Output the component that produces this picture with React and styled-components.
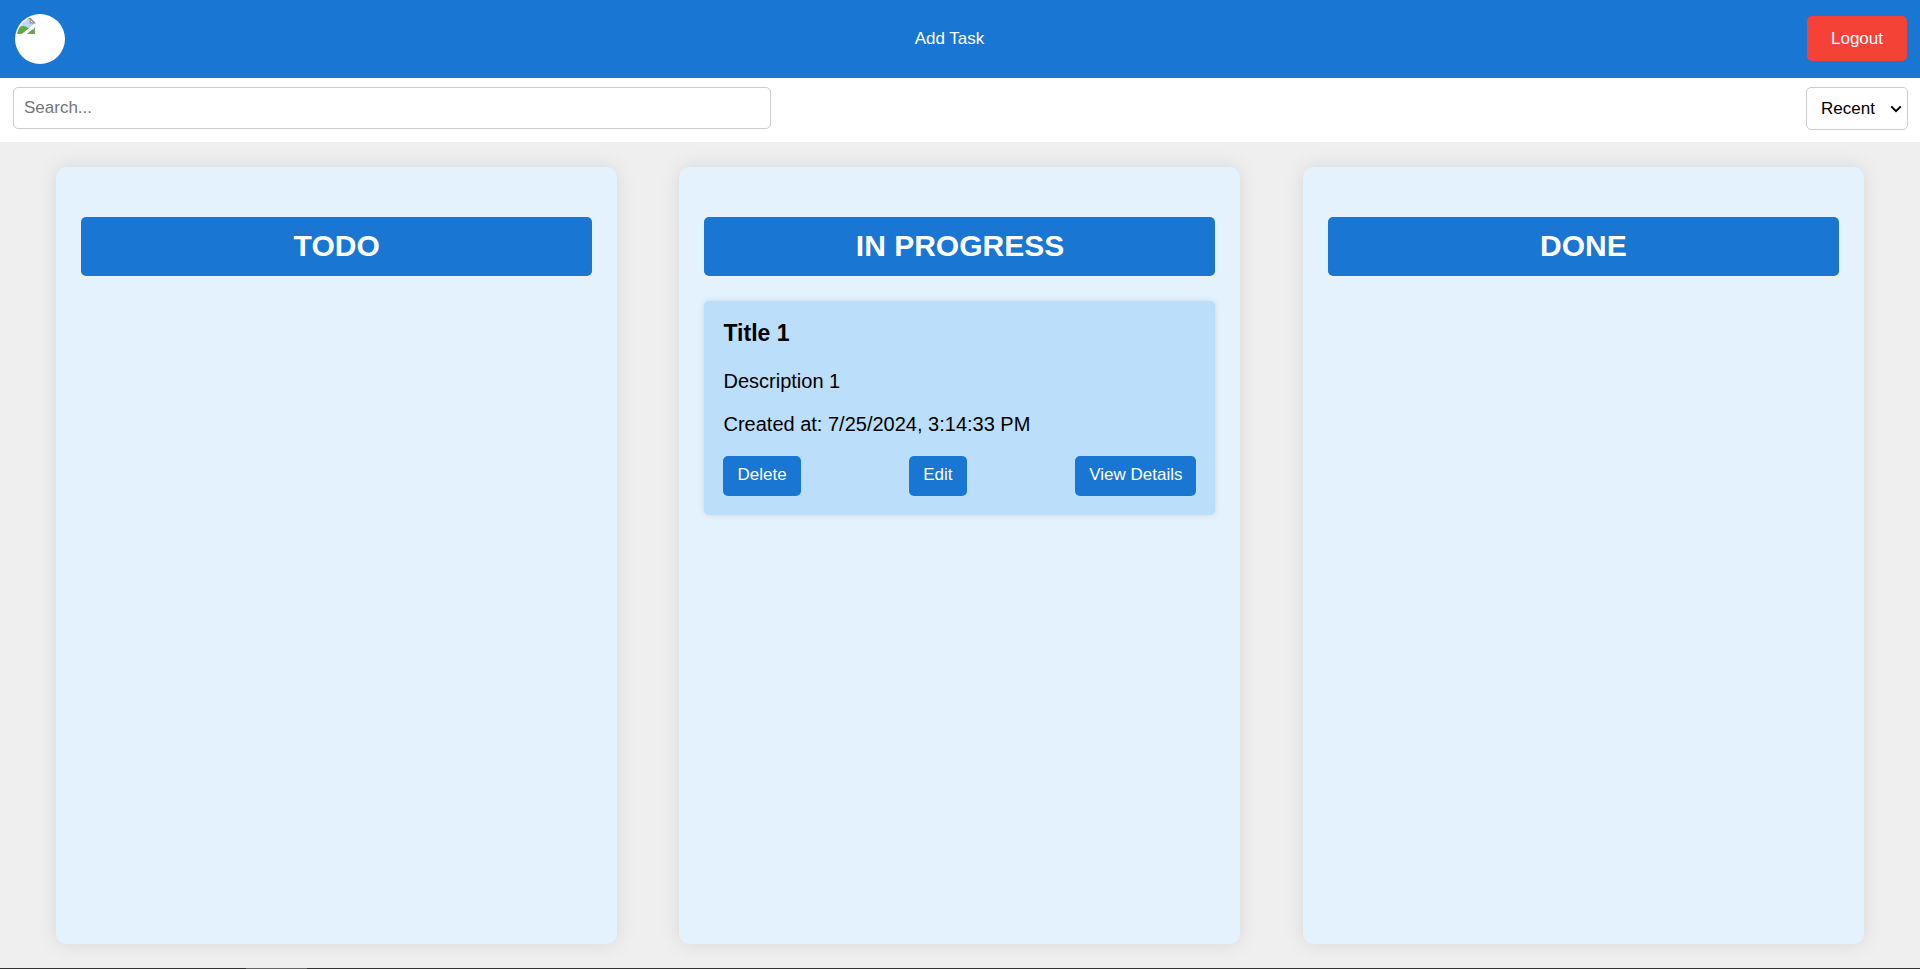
import React from "react";
import styled, { createGlobalStyle } from "styled-components";

const GlobalStyle = createGlobalStyle`
  *, *::before, *::after { box-sizing: border-box; }
  body {
    margin: 0;
    background: #efefef;
    color: #000;
    font-family: "Liberation Sans", Arial, sans-serif;
  }
  button, input, select { font-family: inherit; }
`;

const Page = styled.div`
  display: flex;
  flex-direction: column;
  min-height: 100vh;
`;

const Header = styled.header`
  display: flex;
  align-items: center;
  justify-content: space-between;
  padding: 14px 13px;
  background: #1976d2;
`;

const LogoSlot = styled.div`
  padding: 0 27px 0 2px;
`;

const Logo = styled.div`
  width: 50px;
  height: 50px;
  border-radius: 50%;
  overflow: hidden;
  background: #fff;

  svg { display: block; }
`;

const NavButton = styled.button`
  padding: 0;
  border: 0;
  background: none;
  color: #fff;
  font-size: 17px;
  line-height: 20px;
  cursor: pointer;
`;

const LogoutButton = styled.button`
  min-width: 100px;
  margin-bottom: 1px;
  padding: 13px 20px 12px;
  border: 0;
  border-radius: 5px;
  background: #f44336;
  color: #fff;
  font-size: 17px;
  line-height: 20px;
  cursor: pointer;
`;

const Toolbar = styled.div`
  display: flex;
  align-items: flex-start;
  justify-content: space-between;
  padding: 9px 12px 12px 13px;
  background: #fff;
`;

const SearchInput = styled.input`
  width: 40%;
  height: 42px;
  padding: 10px;
  border: 1px solid #ccc;
  border-radius: 5px;
  font-size: 17px;
  line-height: 20px;

  &::placeholder { color: #757575; }
`;

const SortField = styled.div`
  position: relative;

  svg {
    position: absolute;
    top: 18px;
    right: 6px;
    pointer-events: none;
  }
`;

const SortSelect = styled.select`
  display: block;
  width: 102px;
  height: 43px;
  padding: 10px 14px;
  border: 1px solid #ccc;
  border-radius: 5px;
  appearance: none;
  background: #fff;
  color: #000;
  font-size: 17px;
`;

const Board = styled.main`
  display: flex;
  flex: 1;
  justify-content: space-around;
  padding: 25px 25px 24px;
`;

const Column = styled.section`
  width: 30%;
  padding: 50px 25px 25px;
  border-radius: 10px;
  background: #e3f2fd;
  box-shadow: 0 0 20px rgba(0, 0, 0, 0.1);
`;

const ColumnTitle = styled.h2`
  margin: 0 0 25px;
  padding: 11px 12px 13px;
  border-radius: 5px;
  background: #1976d2;
  color: #fff;
  font-size: 30px;
  line-height: 35px;
  text-align: center;
`;

const Card = styled.article`
  padding: 19px;
  border-radius: 5px;
  background: #bbdefb;
  box-shadow: 0 0 6px rgba(0, 0, 0, 0.1);
`;

const CardTitle = styled.h3`
  margin: 0 0 24px;
  font-size: 23px;
  line-height: 26px;
`;

const CardText = styled.p`
  margin: 0 0 20px;
  font-size: 20px;
  line-height: 23px;
`;

const CardActions = styled.div`
  display: flex;
  justify-content: space-between;
`;

const CardButton = styled.button`
  padding: 9px 14px 11px;
  border: 0;
  border-radius: 5px;
  background: #1976d2;
  color: #fff;
  font-size: 17px;
  line-height: 20px;
  cursor: pointer;
`;

const BottomEdge = styled.footer`
  height: 1px;
  padding-left: 246px;
  background: #333;
`;

const EdgeMark = styled.div`
  width: 61px;
  height: 1px;
  background: #666;
`;

const columns = [
  { name: "TODO", tasks: [] },
  {
    name: "IN PROGRESS",
    tasks: [
      { title: "Title 1", description: "Description 1", created: "7/25/2024, 3:14:33 PM" },
    ],
  },
  { name: "DONE", tasks: [] },
];

function MissingImage() {
  return (
    <svg width="50" height="50" viewBox="0 0 50 50" aria-hidden="true">
      <defs>
        <clipPath id="logo-inner">
          <circle cx="25" cy="25" r="23.5" />
        </clipPath>
      </defs>
      <g clipPath="url(#logo-inner)">
        <path d="M0 5H15L19 9V19H0Z" fill="#c3d5f4" />
        <path d="M0 20V17Q7 9 13 14L19 16V20Z" fill="#5aac3c" />
        <path d="M0 4.7H15.5L19.5 8.7V19.5H0" fill="none" stroke="#929292" strokeWidth="1.2" />
        <path d="M15.2 4.7V8.9H19.5Z" fill="#fff" stroke="#929292" strokeWidth="1.2" />
        <path d="M7.5 21.5L21 10.5" stroke="#fff" strokeWidth="3" />
      </g>
    </svg>
  );
}

function Chevron() {
  return (
    <svg width="12" height="8" viewBox="0 0 12 8" aria-hidden="true">
      <path d="M1.2 1.4L6 6.2L10.8 1.4" fill="none" stroke="#000" strokeWidth="2" />
    </svg>
  );
}

function TaskCard({ task }) {
  return (
    <Card>
      <CardTitle>{task.title}</CardTitle>
      <CardText>{task.description}</CardText>
      <CardText>Created at: {task.created}</CardText>
      <CardActions>
        <CardButton type="button">Delete</CardButton>
        <CardButton type="button">Edit</CardButton>
        <CardButton type="button">View Details</CardButton>
      </CardActions>
    </Card>
  );
}

export default function App() {
  return (
    <>
      <GlobalStyle />
      <Page>
        <Header>
          <LogoSlot>
            <Logo><MissingImage /></Logo>
          </LogoSlot>
          <NavButton type="button">Add Task</NavButton>
          <LogoutButton type="button">Logout</LogoutButton>
        </Header>
        <Toolbar>
          <SearchInput type="text" placeholder="Search..." aria-label="Search" />
          <SortField>
            <SortSelect aria-label="Sort by" defaultValue="recent">
              <option value="recent">Recent</option>
            </SortSelect>
            <Chevron />
          </SortField>
        </Toolbar>
        <Board>
          {columns.map((column) => (
            <Column key={column.name}>
              <ColumnTitle>{column.name}</ColumnTitle>
              {column.tasks.map((task) => (
                <TaskCard key={task.title} task={task} />
              ))}
            </Column>
          ))}
        </Board>
        <BottomEdge>
          <EdgeMark />
        </BottomEdge>
      </Page>
    </>
  );
}
